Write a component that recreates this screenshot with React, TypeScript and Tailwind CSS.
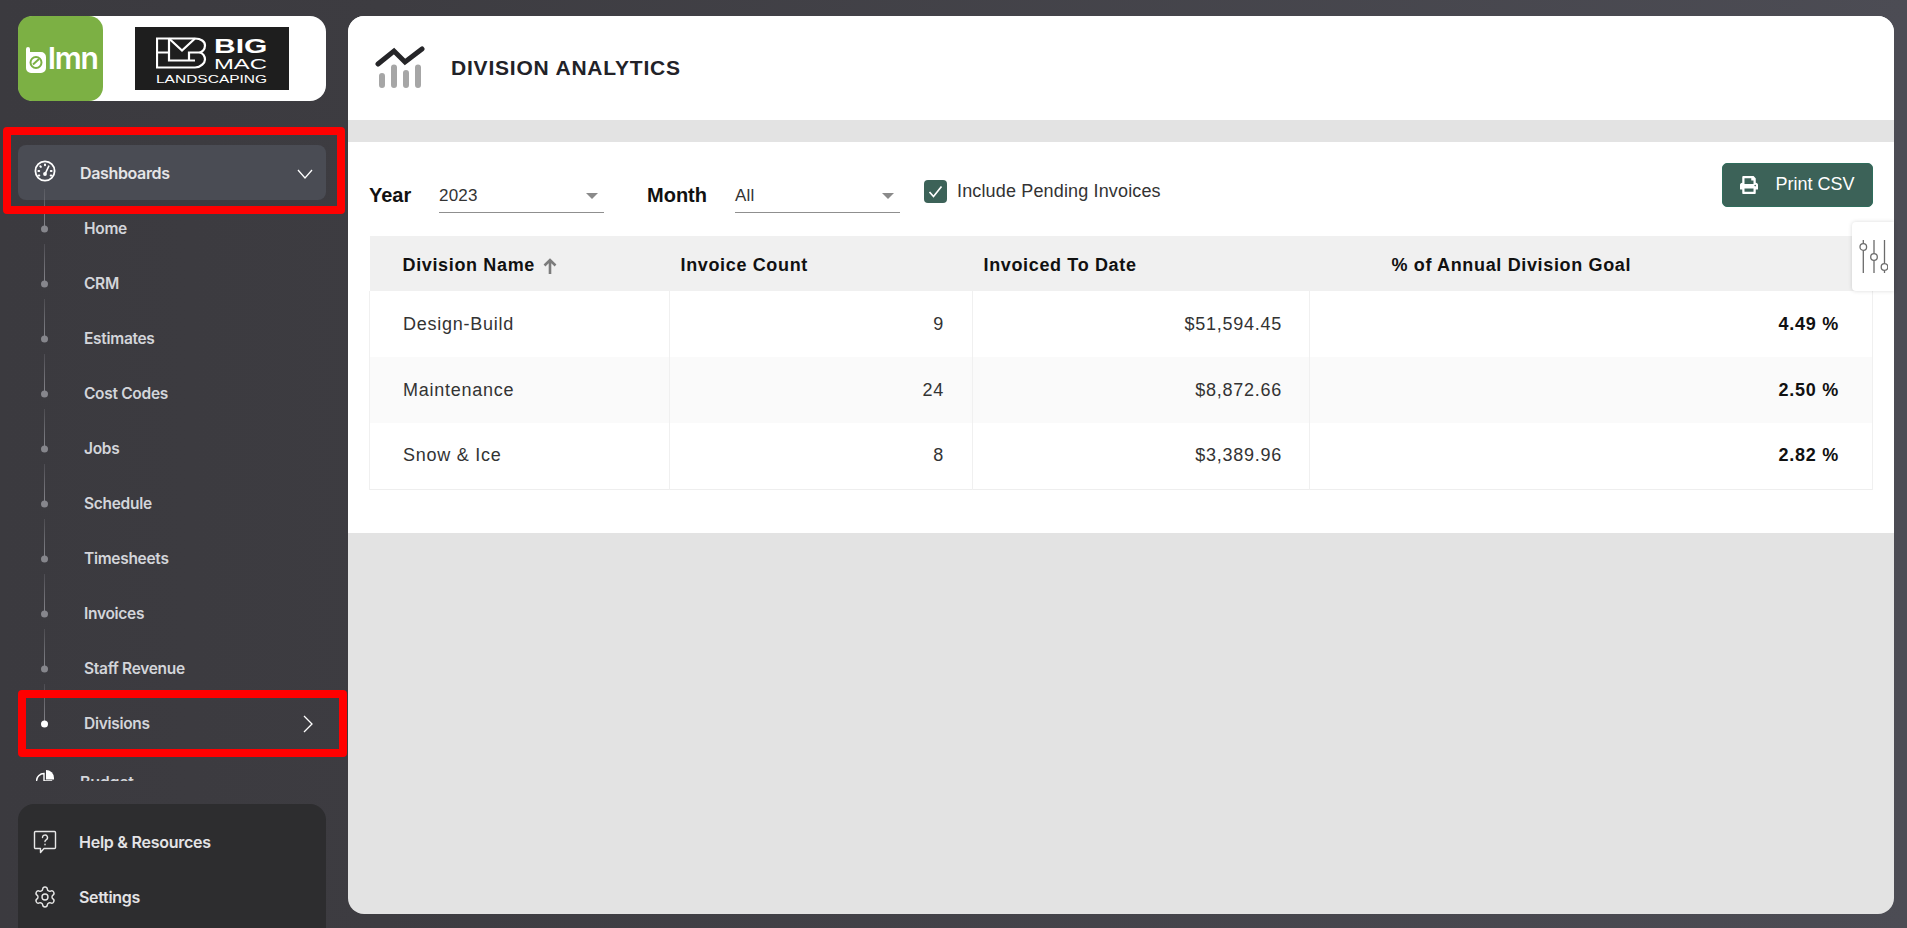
import React from "react";
import { Settings } from "lucide-react";
import { FaPrint } from "react-icons/fa";

const subs = ["Home", "CRM", "Estimates", "Cost Codes", "Jobs", "Schedule", "Timesheets", "Invoices", "Staff Revenue", "Divisions"];
const rows = [
  ["Design-Build", "9", "$51,594.45", "4.49 %"],
  ["Maintenance", "24", "$8,872.66", "2.50 %"],
  ["Snow & Ice", "8", "$3,389.96", "2.82 %"],
];

function GaugeIcon() {
  return (
    <svg width="24" height="24" viewBox="0 0 24 24" fill="none" stroke="white" strokeWidth="1.8" strokeLinecap="round">
      <circle cx="12" cy="12" r="9.6" />
      <path d="M12 5.400v.8M7.300 7.300l.6.6M5.400 12h.8M17.800 12h.8M5.800 16.500h.5M17.700 16.500h.5" strokeWidth="2" />
      <path d="M15.800 7.200l-3.200 6.600" strokeWidth="1.600" />
      <circle cx="12" cy="15" r="1.900" fill="white" stroke="none" />
    </svg>
  );
}

function HelpIcon() {
  return (
    <svg width="24" height="24" viewBox="0 0 24 24" fill="none" stroke="#e8e8e8" strokeWidth="1.4" strokeLinejoin="round">
      <path d="M2.500 1.500h19a1 1 0 0 1 1 1v15a1 1 0 0 1-1 1H11l-3.500 4v-4h-5a1 1 0 0 1-1-1v-15a1 1 0 0 1 1-1z" />
      <path d="M9.500 7.600a2.500 2.500 0 1 1 3.600 2.200c-.8.4-1.100.9-1.100 1.800" strokeLinecap="round" />
      <path d="M12 14.200v.6" strokeLinecap="round" />
    </svg>
  );
}

function BudgetIcon() {
  return (
    <svg width="20" height="20" viewBox="0 0 20 20" className="-mt-[5px]">
      <path d="M8 4.500A7.500 7.500 0 1 0 15.500 12H8z" fill="none" stroke="white" strokeWidth="1.400" />
      <path d="M10 1a8 8 0 0 1 8 8v1.500h-8z" fill="white" />
    </svg>
  );
}

function LmnMark() {
  return (
    <svg width="20" height="26" viewBox="0 0 20 26" className="mt-[2px] shrink-0">
      <path d="M0 2a2 2 0 0 1 4 0v3h11a5 5 0 0 1 5 5v11a5 5 0 0 1-5 5H5a5 5 0 0 1-5-5z" fill="white" />
      <circle cx="10" cy="15.500" r="5.500" fill="none" stroke="#7cb044" strokeWidth="2" />
      <path d="M7 17.500L13 12" stroke="#7cb044" strokeWidth="2" />
    </svg>
  );
}

function BigMacMark() {
  return (
    <svg width="51" height="32" viewBox="0 0 51 32" fill="none" stroke="white" strokeWidth="2.200">
      <path d="M1 1.500h38c6 0 10 3 10 7s-3 7-6 7c4 0 6 4 6 7s-4 8-10 8H1z" />
      <path d="M1 15.500h12v-14M13 1.500l13 12 13-12M13 15.500v8h26M33 23.500v-8h10" />
    </svg>
  );
}

function ChartIcon() {
  return (
    <svg width="50" height="44" viewBox="0 0 50 44" fill="none" strokeLinecap="round">
      <path d="M3 18L19 5l11 11L47 3" stroke="#252528" strokeWidth="5" strokeLinejoin="miter" />
      <path d="M7 30v9M19 21.500V39M31 27v12M43 21.500V39" stroke="#a6a6a6" strokeWidth="6" />
    </svg>
  );
}

function SlidersIcon() {
  return (
    <svg width="30" height="36" viewBox="0 0 30 36" fill="none" stroke="#6b6b6b" strokeWidth="1.300">
      <path d="M5.300 1v3.500M5.300 11.500V34M16 1v13.500M16 21.500V34M26.500 1v23.500M26.500 31.500V34" />
      <circle cx="5.300" cy="8" r="3.300" fill="white" />
      <circle cx="16" cy="18" r="3.300" fill="white" />
      <circle cx="26.500" cy="28" r="3.300" fill="white" />
    </svg>
  );
}

function Caret() {
  return <span className="w-0 h-0 border-x-[6px] border-x-transparent border-t-[6px] border-t-[#8a8a8a]" />;
}

function SelectBox({ value }: { value: string }) {
  return (
    <div className="w-[165px] h-[38px] flex items-center justify-between border-b border-[#8f8f8f] pr-[6px] pt-[4px] text-[17px] text-[#333] tracking-[0.2px]">
      <span>{value}</span>
      <Caret />
    </div>
  );
}

export default function App() {
  return (
    <div className="relative w-[1907px] h-[928px] overflow-hidden flex bg-[linear-gradient(90deg,#3b3a3f_0%,#3d3c41_20%,#4c4c54_100%)] font-['Liberation_Sans',Arial,sans-serif]">
      {/* Sidebar */}
      <aside className="w-[348px] shrink-0 h-full flex flex-col pl-[18px] pr-[22px] font-['Inter',sans-serif]">
        <div className="mt-[16px] h-[85px] bg-white rounded-[16px] flex items-center shrink-0">
          <div className="w-[85px] h-[85px] rounded-[14px] bg-[#7cb044] flex items-center pl-[8px] gap-[2px] shrink-0">
            <LmnMark />
            <span className="text-white font-semibold text-[30px] leading-none tracking-[-1.200px] -mt-[2px]">lmn</span>
          </div>
          <div className="ml-[32px] w-[154px] h-[63px] bg-[#1e1e1e] pl-[21px] pt-[10px] text-white font-['Liberation_Sans',sans-serif] overflow-hidden">
            <div className="flex">
              <BigMacMark />
              <div className="ml-[7px] flex flex-col">
                <span className="inline-block origin-left scale-x-[1.5] font-bold text-[20px] leading-[18px]">BIG</span>
                <span className="inline-block origin-left scale-x-[1.7] text-[14px] leading-[14px] mt-[2px]">MAC</span>
              </div>
            </div>
            <span className="block origin-left scale-x-[1.55] text-[10px] leading-[10px] mt-[4px]">LANDSCAPING</span>
          </div>
        </div>

        <nav className="mt-[44px] h-[636px] shrink-0 overflow-hidden">
          <div className="h-[55px] rounded-[8px] bg-[#4a4c54] flex items-center pl-[15px] pr-[13px] text-[#e4e4e6]">
            <span className="w-[24px] flex justify-center -mt-[4px]"><GaugeIcon /></span>
            <span className="ml-[23px] flex-1 font-semibold text-[16px] tracking-[-0.35px]">Dashboards</span>
            <svg width="16" height="10" viewBox="0 0 16 10" fill="none" stroke="white" strokeWidth="1.300" className="mt-[3px]"><path d="M1 1l7 8 7-8" /></svg>
          </div>
          <div className="mt-[1px]">
            {subs.map((s) => {
              const active = s === "Divisions";
              return (
                <div key={s} className="relative h-[55px] flex items-center pl-[66px] pr-[13px] text-[#d3d5da]">
                  <span className="absolute left-[26px] bottom-1/2 w-px h-[40px] bg-[linear-gradient(180deg,rgba(130,130,136,0.25),#88888e)]" />
                  <span className={`absolute left-[23px] top-1/2 -translate-y-1/2 w-[7px] h-[7px] rounded-full ${active ? "bg-white" : "bg-[#86868c]"}`} />
                  <span className="flex-1 font-semibold text-[15.500px] tracking-[-0.3px]">{s}</span>
                  {active && <svg width="10" height="18" viewBox="0 0 10 18" fill="none" stroke="white" strokeWidth="1.300"><path d="M1 1l8 8-8 8" /></svg>}
                </div>
              );
            })}
          </div>
          <div className="mt-[3px] h-[55px] flex items-center pl-[18px] text-[#d3d5da]">
            <BudgetIcon />
            <span className="ml-[24px] font-semibold text-[16px] tracking-[-0.3px]">Budget</span>
          </div>
        </nav>

        <div className="mt-[23px] flex-1 rounded-t-[16px] bg-[#2d2d2f] pl-[15px] text-[#e4e4e6]">
          <div className="h-[55px] mt-[10px] flex items-center">
            <span className="w-[24px] flex justify-center"><HelpIcon /></span>
            <span className="ml-[22px] font-semibold text-[16px] tracking-[-0.25px]">Help &amp; Resources</span>
          </div>
          <div className="h-[55px] flex items-center">
            <Settings size={24} strokeWidth={1.4} color="#e8e8e8" />
            <span className="ml-[22px] font-semibold text-[16px] tracking-[-0.3px]">Settings</span>
          </div>
        </div>
      </aside>

      {/* Main */}
      <main className="mt-[16px] mb-[14px] w-[1546px] bg-[#e3e3e3] rounded-[16px] overflow-hidden flex flex-col">
        <header className="h-[104px] bg-white flex items-center pl-[27px] shrink-0">
          <ChartIcon />
          <h1 className="ml-[26px] font-bold text-[21px] tracking-[0.8px] text-[#222228]">DIVISION ANALYTICS</h1>
        </header>
        <section className="mt-[22px] h-[391px] bg-white pl-[21px] pr-[21px] flex flex-col">
          <div className="flex items-start h-[94px] pt-[21px]">
            <div className="flex items-center h-[38px] mt-[12px]">
              <span className="font-bold text-[20px] text-[#111] w-[70px] pt-[1px]">Year</span>
              <SelectBox value="2023" />
              <span className="ml-[43px] font-bold text-[20px] text-[#111] w-[88px] pt-[1px]">Month</span>
              <SelectBox value="All" />
            </div>
            <label className="ml-[24px] mt-[9px] flex items-center h-[38px] text-[18px] text-[#333] tracking-[0.15px]">
              <span className="w-[23px] h-[23px] rounded-[4px] bg-[#3c6258] flex items-center justify-center mr-[10px]">
                <svg width="15" height="13" viewBox="0 0 15 13" fill="none" stroke="white" strokeWidth="1.700"><path d="M1.500 7l4 4.500L13.500 1.500" /></svg>
              </span>
              Include Pending Invoices
            </label>
            <button className="ml-auto w-[151px] h-[44px] rounded-[5px] bg-[#3c6258] border border-[#2f6d5c] text-white text-[18px] flex items-center justify-center gap-[17px]">
              <FaPrint size={18} />
              <span className="-mt-[2px]">Print CSV</span>
            </button>
          </div>
          <table className="w-[1503px] table-fixed border-collapse text-[18px] text-[#333] tracking-[0.75px]">
            <colgroup>
              <col className="w-[300px]" />
              <col className="w-[303px]" />
              <col className="w-[337px]" />
              <col className="w-[563px]" />
            </colgroup>
            <thead>
              <tr className="h-[55px] bg-[#f0f0f0] text-[#111] tracking-[0.65px]">
                <th className="pl-[33px] pt-[4px] text-left font-bold">
                  <span className="inline-flex items-center gap-[8px]">
                    Division Name
                    <svg width="14" height="16" viewBox="0 0 14 16" fill="none" stroke="#7c7c7c" strokeWidth="2.600"><path d="M7 16V2M1.500 7.500L7 2l5.500 5.500" /></svg>
                  </span>
                </th>
                <th className="pl-[11px] pt-[4px] text-left font-bold">Invoice Count</th>
                <th className="pl-[11px] pt-[4px] text-left font-bold">Invoiced To Date</th>
                <th className="pl-[82px] pt-[4px] text-left font-bold">% of Annual Division Goal</th>
              </tr>
            </thead>
            <tbody className="border-b border-[#eeeeee]">
              {rows.map((r, i) => (
                <tr key={r[0]} className={`h-[66px] ${i === 1 ? "bg-[#fafafa]" : "bg-white"}`}>
                  <td className="pl-[33px] border-x border-[#f0f0f0]">{r[0]}</td>
                  <td className="pr-[28px] text-right border-x border-[#f0f0f0]">{r[1]}</td>
                  <td className="pr-[27px] text-right border-x border-[#f0f0f0]">{r[2]}</td>
                  <td className="pr-[33px] text-right border-x border-[#f0f0f0] font-bold text-[#111]">{r[3]}</td>
                </tr>
              ))}
            </tbody>
          </table>
        </section>
      </main>

      {/* Floating overlays */}
      <div className="absolute right-[13px] top-[222px] w-[42px] h-[69px] bg-white rounded-l-[4px] shadow-[0_0_4px_rgba(0,0,0,0.15)] flex items-center justify-center">
        <SlidersIcon />
      </div>
      <div className="absolute left-[3px] top-[127px] w-[342px] h-[87px] border-[8px] border-[#ff0000] rounded-[4px]" />
      <div className="absolute left-[18px] top-[690px] w-[329px] h-[67px] border-[8px] border-[#ff0000] rounded-[4px]" />
    </div>
  );
}
